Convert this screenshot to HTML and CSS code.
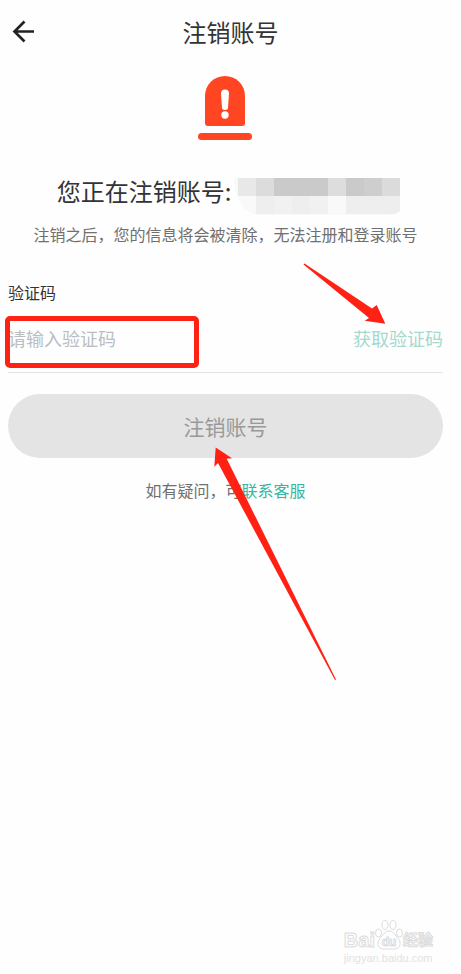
FILE: index.html
```
<!DOCTYPE html>
<html lang="zh-CN">

<head>
    <meta charset="UTF-8">
    <meta name="viewport" content="width=device-width, initial-scale=1.0">
    <title>注销账号</title>
    <link rel="stylesheet" href="styles.css">
</head>

<body>
    <header class="header">
        <button class="back" type="button" aria-label="返回">
            <svg width="24" height="24" viewBox="0 0 24 24" fill="none" stroke="#222" stroke-width="2.7">
                <path d="M12.500 1.500L2.500 11.500l10 10M3 11.500h19" />
            </svg>
        </button>
        <h1 class="title">注销账号</h1>
    </header>
    <main class="main">
        <svg class="alarm" width="55" height="64" viewBox="0 0 55 64">
            <path fill="#ff4522" d="M7 20a20 20 0 0 1 40 0v27a3 3 0 0 1-3 3H10a3 3 0 0 1-3-3z" />
            <rect fill="#ff4522" y="57" width="54" height="7" rx="3.500" />
            <path fill="#fff" d="M23 17.500a4 4 0 0 1 8 0l-1 14a3 2.500 0 0 1-6 0z" />
            <circle fill="#fff" cx="27" cy="39" r="3.700" />
        </svg>
        <div class="account">
            <span>您正在注销账号:</span>
            <svg class="mosaic" width="166" height="37" viewBox="0 0 166 37" role="img" aria-label="账号已隐藏">
                <clipPath id="round">
                    <path d="M0 0h166v33q-4 4-12 4H24Q2 34 0 0z" />
                </clipPath>
                <g clip-path="url(#round)">
                    <path fill="#f9f9f9" d="M0 0h166v37H0z" />
                    <path fill="#e8e8e8" d="M4 0h18v18H4z" />
                    <path fill="#dcdcdc" d="M22 0h18v18H22z" />
                    <path fill="#cacaca" d="M40 0h54v18H40z" />
                    <path fill="#dddddd" d="M94 0h18v18H94z" />
                    <path fill="#cacaca" d="M112 0h18v18h-18z" />
                    <path fill="#cecece" d="M130 0h18v18h-18z" />
                    <path fill="#dbdbdb" d="M148 0h18v18h-18z" />
                    <path fill="#eeeeee" d="M22 18h18v18H22zM58 18h18v18H58zM112 18h54v18h-54z" />
                    <path fill="#f1f1f1" d="M40 18h18v18H40zM76 18h18v18H76z" />
                </g>
            </svg>
        </div>
        <p class="hint">注销之后，您的信息将会被清除，无法注册和登录账号</p>
        <form class="form">
            <label class="label" for="code">验证码</label>
            <div class="field">
                <input class="input" id="code" type="text" placeholder="请输入验证码">
                <button class="get-code" type="button">获取验证码</button>
            </div>
            <button class="submit" type="submit" disabled>注销账号</button>
        </form>
        <p class="help">如有疑问，可<a href="#">联系客服</a></p>
    </main>

    <!-- marks that point out the steps -->
    <div class="mark-box"></div>
    <svg class="marks" width="400" height="690" viewBox="0 0 400 690">
        <path d="M303.500 264.500L304.500 263.500 372 308.500 376.700 305 385.300 323.700 364.700 320.700 369 318z" />
        <path d="M215.700 447.500L232 458.200 226.700 458.700 336 679.500 335 680 218 463 214.300 466.700z" />
    </svg>

    <div class="watermark">
        <div class="logo">
            <span>Bai</span>
            <svg width="28" height="30" viewBox="0 0 28 30" fill="#fff" stroke="#dcdcdc">
                <ellipse cx="3.500" cy="13" rx="3" ry="4" />
                <ellipse cx="10" cy="5" rx="3" ry="4.500" />
                <ellipse cx="18" cy="5" rx="3" ry="4.500" />
                <ellipse cx="24.500" cy="13" rx="3" ry="4" />
                <path d="M14 11c4 0 5 3 8 6 5 5 4 12-3 12H9c-7 0-8-7-3-12 3-3 4-6 8-6z" />
                <text class="du" x="14" y="26" text-anchor="middle">du</text>
            </svg>
            <span class="jy">经验</span>
        </div>
        <div class="site">jingyan.baidu.com</div>
    </div>
</body>

</html>
```
FILE: styles.css
```
* {
    box-sizing: border-box;
}
body {
    position: relative;
    margin: 0;
    min-height: 100vh;
    background-color: #fefefe;
    color: #333;
    font-family: "Noto Sans CJK SC", sans-serif;
    font-size: 16px;
    line-height: 24px;
}
button, input {
    padding: 0;
    border: none;
    background: none;
    font-family: inherit;
}
h1, p {
    margin: 0;
    font-weight: normal;
}
.header {
    display: grid;
    grid-template-columns: 24px 1fr 24px;
    align-items: center;
    height: 64px;
    padding: 0 12px;
}
.back {
    height: 24px;
    cursor: pointer;
}
.back svg {
    display: block;
}
.title {
    font-size: 24px;
    line-height: 32px;
    text-align: center;
}
.main {
    display: flex;
    flex-direction: column;
    align-items: center;
    padding: 12px 18px 0 8px;
}
.account {
    display: flex;
    align-items: flex-start;
    gap: 3px;
    margin-top: 35px;
    margin-right: -6px;
    font-size: 24px;
    line-height: 32px;
}
.mosaic {
    margin-top: 3px;
}
.hint {
    margin-top: 7px;
    color: #707070;
    white-space: nowrap;
}
.form {
    align-self: stretch;
    margin-top: 34px;
}
.label {
    display: block;
}
.field {
    display: flex;
    align-items: center;
    height: 69px;
    border-bottom: 1px solid #e3e3e3;
}
.input {
    flex: 1;
    min-width: 0;
    font-size: 18px;
    outline: none;
}
.input::placeholder {
    color: #b9bec2;
}
.get-code {
    color: #a3d9cf;
    font-size: 18px;
    cursor: pointer;
}
.submit {
    display: block;
    width: 100%;
    height: 64px;
    margin-top: 21px;
    border-radius: 32px;
    background-color: #e4e4e4;
    color: #999;
    font-size: 21px;
}
.help {
    margin-top: 20px;
    color: #707070;
}
.help a {
    color: #35b5a2;
    text-decoration: none;
}
.mark-box {
    position: absolute;
    top: 316px;
    left: 5px;
    width: 194px;
    height: 52px;
    border: 5px solid #ff2113;
    border-radius: 5px;
    pointer-events: none;
}
.marks {
    position: absolute;
    top: 0;
    left: 0;
    fill: #ff2113;
    pointer-events: none;
}
.watermark {
    position: absolute;
    right: 28px;
    bottom: 8px;
    color: #fff;
    font-family: "Liberation Sans", "Noto Sans CJK SC", sans-serif;
    -webkit-text-stroke: 1px #dcdcdc;
}
.logo {
    display: flex;
    align-items: flex-end;
    font-size: 20px;
    font-weight: bold;
    line-height: 20px;
}
.logo .jy {
    font-size: 15px;
}
.du {
    font-size: 12px;
}
.site {
    color: #e2e2e2;
    font-size: 11px;
    line-height: 16px;
    -webkit-text-stroke: 0;
}
```
